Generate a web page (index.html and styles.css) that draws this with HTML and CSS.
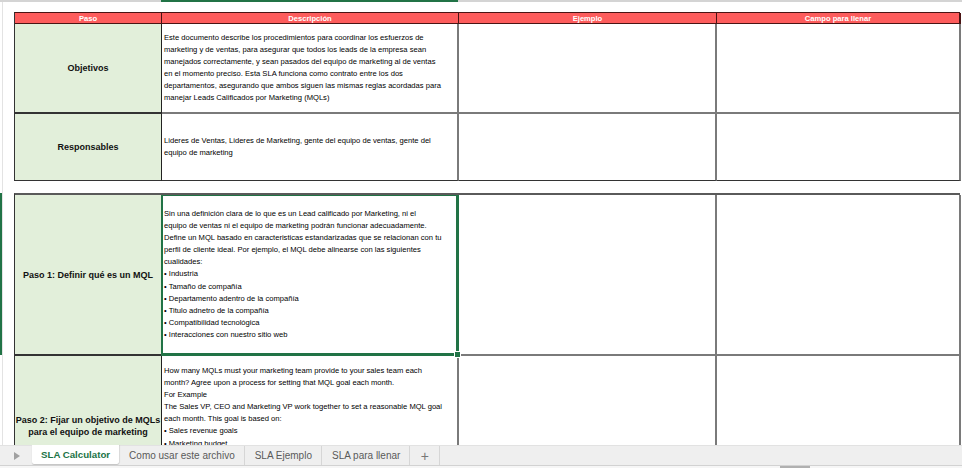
FILE: index.html
```html
<!DOCTYPE html>
<html lang="es">
<head>
<meta charset="utf-8">
<title>SLA Calculator</title>
<link rel="stylesheet" href="styles.css">
</head>
<body>
<div class="app">
  <div class="colbar"><div class="colbar-sel"></div></div>
  <div class="sheet">
    <div class="rowsel"></div>
    <div class="grid t1">
      <div class="hd">Paso</div>
      <div class="hd">Descripción</div>
      <div class="hd">Ejemplo</div>
      <div class="hd last">Campo para llenar</div>

      <div class="lbl gb">Objetivos</div>
      <div class="desc gb">Este documento describe los procedimientos para coordinar los esfuerzos de<br>marketing y de ventas, para asegurar que todos los leads de la empresa sean<br>manejados correctamente, y sean pasados del equipo de marketing al de ventas<br>en el momento preciso. Esta SLA funciona como contrato entre los dos<br>departamentos, asegurando que ambos siguen las mismas reglas acordadas para<br>manejar Leads Calificados por Marketing (MQLs)</div>
      <div class="cell gb"></div>
      <div class="cell gb"></div>

      <div class="lbl db">Responsables</div>
      <div class="desc db">Lideres de Ventas, Lideres de Marketing, gente del equipo de ventas, gente del<br>equipo de marketing</div>
      <div class="cell db"></div>
      <div class="cell db"></div>
    </div>

    <div class="grid t2">
      <div class="lbl gb">Paso 1: Definir qué es un MQL</div>
      <div class="desc gb sel">Sin una definición clara de lo que es un Lead calificado por Marketing, ni el<br>equipo de ventas ni el equipo de marketing podrán funcionar adecuadamente.<br>Define un MQL basado en caracteristicas estandarizadas que se relacionan con tu<br>perfil de cliente ideal. Por ejemplo, el MQL debe alinearse con las siguientes<br>cualidades:<br>• Industria<br>• Tamaño de compañía<br>• Departamento adentro de la compañía<br>• Titulo adnetro de la compañía<br>• Compatibilidad tecnológica<br>• Interacciones con nuestro sitio web</div>
      <div class="cell gb"></div>
      <div class="cell gb"></div>

      <div class="lbl db">Paso 2: Fijar un objetivo de MQLs<br>para el equipo de marketing</div>
      <div class="desc db top">How many MQLs must your marketing team provide to your sales team each<br>month? Agree upon a process for setting that MQL goal each month.<br>For Example<br>The Sales VP, CEO and Marketing VP work together to set a reasonable MQL goal<br>each month. This goal is based on:<br>• Sales revenue goals<br>• Marketing budget</div>
      <div class="cell db"></div>
      <div class="cell db"></div>
    </div>
  </div>

  <div class="tabs">
    <div class="nav">
      <svg width="6" height="8" viewBox="0 0 6 8"><path d="M0 0 L6 4 L0 8 Z" fill="#a0a0a0"/></svg>
    </div>
    <div class="tab active">SLA Calculator</div>
    <div class="tab">Como usar este archivo</div>
    <div class="tab">SLA Ejemplo</div>
    <div class="tab">SLA para llenar</div>
    <div class="tab plus">+</div>
  </div>
  <div class="hscroll"><div class="thumb"></div></div>
</div>
</body>
</html>
```
FILE: styles.css
```css
* { box-sizing: border-box; }
html, body { margin: 0; padding: 0; background: #fff; }
body { font-family: "Liberation Sans", Arial, sans-serif; }

.app {
  width: 962px;
  height: 468px;
  display: flex;
  flex-direction: column;
  overflow: hidden;
}

.colbar {
  height: 2px;
  background: #d4d4d4;
  flex: none;
  position: relative;
}
.colbar-sel {
  position: absolute;
  left: 161px;
  width: 297px;
  top: 0;
  height: 2px;
  background: #217346;
}

.sheet {
  height: 443px;
  flex: none;
  overflow: hidden;
  position: relative;
  padding: 10px 0 0 14px;
  display: flex;
  flex-direction: column;
  gap: 12px;
}
.sheet::before {
  content: "";
  position: absolute;
  left: 2px;
  top: 0;
  bottom: 0;
  width: 1px;
  background: #e3e3e3;
}
.rowsel {
  position: absolute;
  left: 0;
  top: 191px;
  width: 2px;
  height: 162px;
  background: #217346;
}

.grid {
  display: grid;
  grid-template-columns: 147px 297px 258px 244px;
  width: 946px;
  flex: none;
  border-left: 1px solid #333;
}
.t1 {
  grid-template-rows: 11px 90px 67px;
  border-top: 1px solid #4a1414;
}
.t2 {
  grid-template-rows: 161px 140px;
  border-top: 2px solid #5a5a5a;
}

.hd {
  background: #fd5c5c;
  color: #fff;
  font-weight: bold;
  font-size: 7.6px;
  line-height: 11px;
  text-align: center;
  border-right: 1px solid #4a1414;
  border-bottom: 1px solid #4a1414;
}
.hd.last { border-right: 2px solid #4a1414; }

.lbl, .desc, .cell {
  border-right: 2px solid #7a7a7a;
}
.lbl {
  background: #e2efda;
  border-right: 1px solid #222;
  display: flex;
  align-items: center;
  justify-content: center;
  text-align: center;
  font-weight: bold;
  font-size: 9px;
  line-height: 12px;
  color: #111;
}
.desc {
  display: flex;
  align-items: center;
  padding-left: 2px;
  font-size: 7.6px;
  line-height: 12.1px;
  color: #000;
  white-space: nowrap;
  overflow: visible;
}
.desc.top {
  align-items: flex-start;
  padding-top: 9px;
}
.gb { border-bottom: 2px solid #7a7a7a; }
.lbl.gb { border-bottom: 2px solid #333; }
.db { border-bottom: 1px solid #333; }

.sel {
  position: relative;
  box-shadow: inset 0 0 0 1px #217346;
  border-left: 1px solid #217346;
  margin-left: -1px;
  border-bottom-color: #217346;
  border-right-color: #217346;
}
.sel::after {
  content: "";
  position: absolute;
  right: -4px;
  bottom: -4px;
  width: 5px;
  height: 5px;
  background: #217346;
  border: 1px solid #fff;
}

.tabs {
  height: 20px;
  flex: none;
  background: #efefef;
  border-top: 1px solid #e2e2e2;
  display: flex;
  align-items: stretch;
  font-size: 10px;
  color: #5a5a5a;
}
.nav {
  width: 32px;
  display: flex;
  align-items: center;
  padding-left: 14px;
}
.tab {
  padding: 0 9px 0 10px;
  display: flex;
  align-items: center;
  border-right: 1px solid #d6d6d6;
  white-space: nowrap;
}
.tab.active {
  background: #fff;
  color: #217346;
  font-weight: bold;
  font-size: 9.7px;
  padding: 0 9px;
  border-right: none;
  margin-top: -1px;
  margin-bottom: 1px;
  box-shadow: 0 1px 1px rgba(0,0,0,0.18), 1px 0 1px rgba(0,0,0,0.08);
  border-radius: 0 0 2px 2px;
}
.tab.plus {
  width: 30px;
  justify-content: center;
  padding: 0;
  font-size: 14px;
  color: #777;
}

.hscroll {
  height: 3px;
  flex: none;
  background: #f6f6f6;
  border-top: 1px solid #d2d2d2;
  position: relative;
}
.thumb {
  position: absolute;
  left: 780px;
  top: 0;
  width: 30px;
  height: 2px;
  background: #b0b0b0;
}
```
